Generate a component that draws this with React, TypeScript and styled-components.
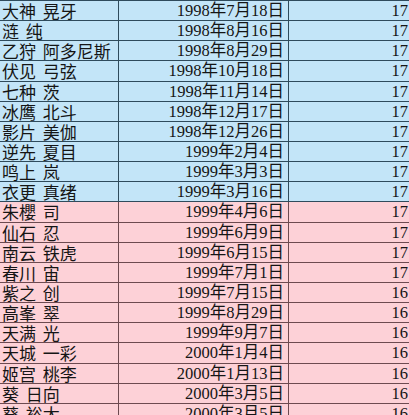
import styled, { createGlobalStyle } from 'styled-components'

type Tone = 'blue' | 'pink'

const rows: Array<[string, string, number]> = [
	['大神 晃牙', '1998年7月18日', 17],
	['涟 纯', '1998年8月16日', 17],
	['乙狩 阿多尼斯', '1998年8月29日', 17],
	['伏见 弓弦', '1998年10月18日', 17],
	['七种 茨', '1998年11月14日', 17],
	['冰鹰 北斗', '1998年12月17日', 17],
	['影片 美伽', '1998年12月26日', 17],
	['逆先 夏目', '1999年2月4日', 17],
	['鸣上 岚', '1999年3月3日', 17],
	['衣更 真绪', '1999年3月16日', 17],
	['朱櫻 司', '1999年4月6日', 17],
	['仙石 忍', '1999年6月9日', 17],
	['南云 铁虎', '1999年6月15日', 17],
	['春川 宙', '1999年7月1日', 17],
	['紫之 创', '1999年7月15日', 16],
	['高峯 翠', '1999年8月29日', 16],
	['天满 光', '1999年9月7日', 16],
	['天城 一彩', '2000年1月4日', 16],
	['姬宫 桃李', '2000年1月13日', 16],
	['葵 日向', '2000年3月5日', 16],
	['葵 裕太', '2000年3月5日', 16],
]

const palette = {
	blue: { bg: '#c3e5f8', line: '#2f4b5c' },
	pink: { bg: '#fdd1d7', line: '#6d4a50' },
}

function App() {
	return (
		<>
			<GlobalStyle />
			<Sheet>
				{rows.map(([name, birthday, age], i) => {
					const tone: Tone = i < 10 ? 'blue' : 'pink'
					return (
						<Row key={i} $tone={tone}>
							<NameCell>{name}</NameCell>
							<DateCell $tone={tone}>{birthday}</DateCell>
							<AgeCell $tone={tone}>{age}</AgeCell>
						</Row>
					)
				})}
			</Sheet>
		</>
	)
}

const GlobalStyle = createGlobalStyle`
	html, body {
		margin: 0;
		padding: 0;
		background: #fdd1d7;
		overflow: hidden;
	}
`

const Sheet = styled.div`
	width: 409px;
	border-top: 1px solid ${palette.blue.line};
	color: #151515;
`

const Row = styled.div<{ $tone: Tone }>`
	display: grid;
	grid-template-columns: 118px 170px 1fr;
	height: 20.15px;
	box-sizing: border-box;
	background: ${(p) => palette[p.$tone].bg};
	border-bottom: 1px solid ${(p) => palette[p.$tone].line};
`

const Cell = styled.div`
	display: flex;
	align-items: center;
	box-sizing: border-box;
	white-space: nowrap;
	font-size: 16.5px;
	line-height: 19px;
`

const NameCell = styled(Cell)`
	padding-left: 2px;
	font-size: 17px;
	word-spacing: 3px;
	font-family: "Noto Sans CJK SC", sans-serif;
`

const DateCell = styled(Cell)<{ $tone: Tone }>`
	justify-content: flex-end;
	padding-right: 4px;
	border-left: 1px solid ${(p) => palette[p.$tone].line};
	font-family: "Liberation Serif", "Noto Sans CJK SC", serif;
`

const AgeCell = styled(Cell)<{ $tone: Tone }>`
	justify-content: flex-end;
	padding-right: 1px;
	border-left: 1px solid ${(p) => palette[p.$tone].line};
	font-family: "Liberation Serif", serif;
`

export default App
